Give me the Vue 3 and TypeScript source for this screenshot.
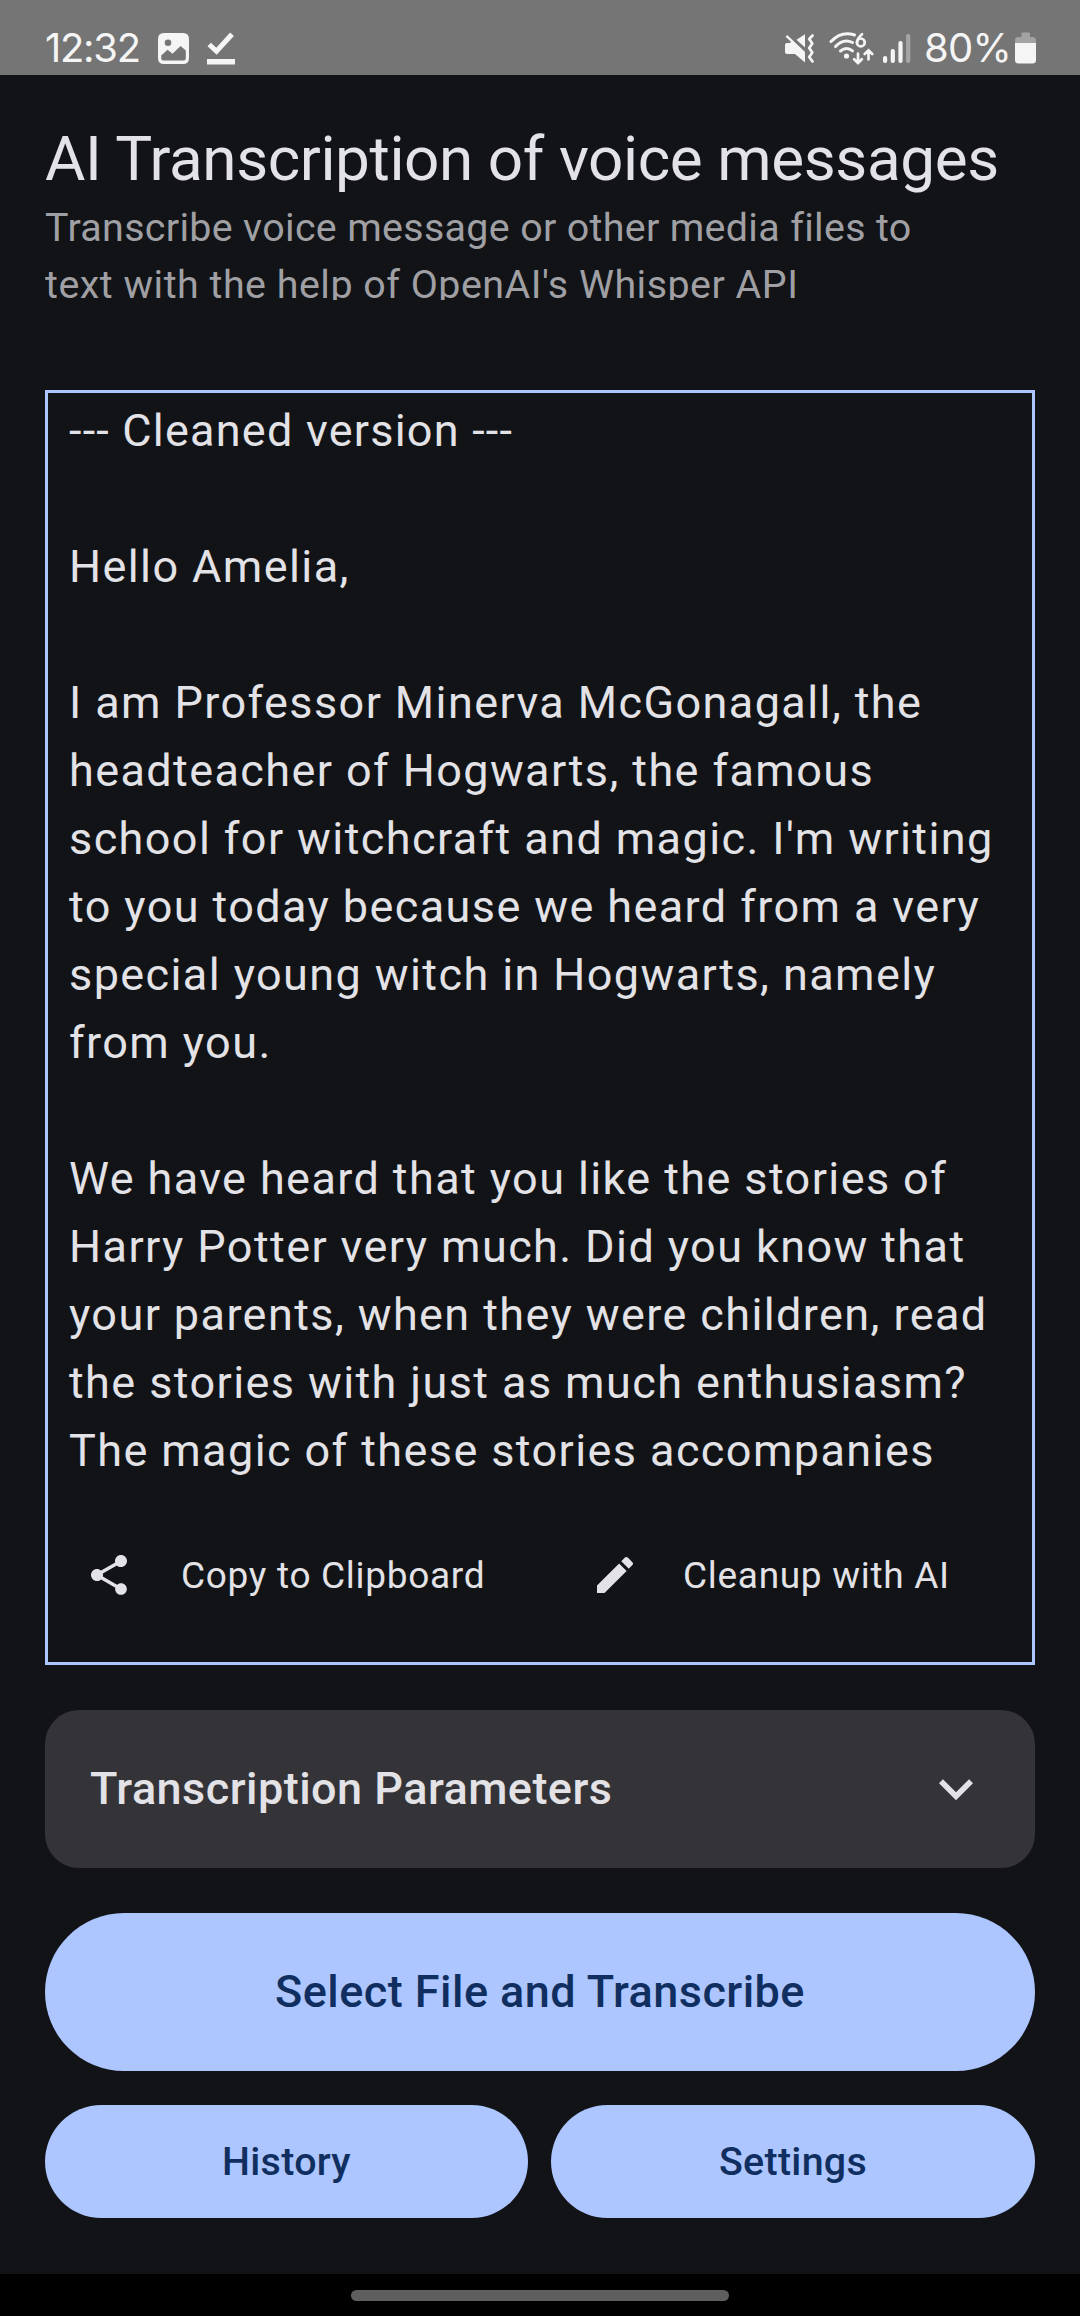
<script setup lang="ts">
const heading = '--- Cleaned version ---'

const transcript: string = [
  '',
  'Hello Amelia,',
  '',
  'I am Professor Minerva McGonagall, the',
  'headteacher of Hogwarts, the famous',
  "school for witchcraft and magic. I'm writing",
  'to you today because we heard from a very',
  'special young witch in Hogwarts, namely',
  'from you.',
  '',
  'We have heard that you like the stories of',
  'Harry Potter very much. Did you know that',
  'your parents, when they were children, read',
  'the stories with just as much enthusiasm?',
  'The magic of these stories accompanies',
].join('\n')
</script>

<template>
  <div class="screen">
    <div class="status">
      <span class="clock">12:32</span>
      <svg class="s-image" width="31" height="31" viewBox="0 0 31 31">
        <path fill="#f5f5f5" fill-rule="evenodd" d="M6 0H25Q31 0 31 6V25Q31 31 25 31H6Q0 31 0 25V6Q0 0 6 0ZM10 6.4a3.3 3.3 0 1 0 0 6.6a3.3 3.3 0 1 0 0-6.6ZM3.2 22.6V25.3Q3.2 27.6 5.5 27.6H25.5Q27.8 27.6 27.8 25.3V17.6L22.6 12.9L14.5 20.7L9.6 16.7Z" />
      </svg>
      <svg class="s-check" width="28" height="33" viewBox="0 0 28 33">
        <path d="M2.2 12.5L9.5 19.3L25 2.2" fill="none" stroke="#f5f5f5" stroke-width="5" />
        <rect x="0" y="27" width="28" height="5.5" fill="#f5f5f5" />
      </svg>
      <span class="spacer"></span>
      <svg class="s-mute" width="31" height="29" viewBox="0 0 31 29">
        <path d="M3 9H7L21 22V28.6L11 20H3Q1 20 1 18V11Q1 9 3 9Z" fill="#f5f5f5" />
        <path d="M12.5 5.8L21 .2V13.6Z" fill="#f5f5f5" />
        <path d="M5.5 9.5L21 24V18.5L8 7Z" fill="#f5f5f5" />
        <path d="M2.4 1.8L20 18.5" stroke="#f5f5f5" stroke-width="2.4" />
        <path d="M28.5 1.5L25.2 5L28.3 9.5L25.2 14L28.3 18.5L25.2 23L28.5 27.5" fill="none" stroke="#f5f5f5" stroke-width="2.7" stroke-linejoin="round" stroke-linecap="round" />
      </svg>
      <svg class="s-wifi" width="45" height="33" viewBox="0 0 45 33">
        <g fill="none" stroke="#f5f5f5" stroke-width="3" stroke-linecap="round">
          <path d="M2 9.5Q12.5-1.5 25.5 3" />
          <path d="M6.5 14.5Q14.5 6 23.5 10.5" />
          <path d="M11.5 19Q17.5 14 23.5 18.8" />
          <path d="M33 2.2Q28.5 6 28 10.5" stroke-width="2.7" />
          <circle cx="31.8" cy="10.4" r="3.9" stroke-width="2.7" />
          <path d="M29 21.5V31M25.2 27.3L29 31L32.8 27.3M39.5 27.5V18.5M35.7 22L39.5 18.3L43.2 22" stroke-width="2.7" />
        </g>
        <circle cx="17.5" cy="24" r="2.6" fill="#f5f5f5" />
      </svg>
      <svg class="s-signal" width="28" height="30" viewBox="0 0 28 30">
        <g fill="#f5f5f5">
          <rect x="0" y="22" width="4.2" height="7" rx="2" />
          <rect x="7.7" y="15" width="4.2" height="14" rx="2" />
          <rect x="15.4" y="7" width="4.2" height="22" rx="2" />
          <rect x="23.1" y="0" width="4.2" height="29" rx="2" opacity=".38" />
        </g>
      </svg>
      <span class="percent">80%</span>
      <svg class="s-battery" width="21" height="32" viewBox="0 0 21 32">
        <path d="M6.5 1.5Q6.5.5 7.5.5H14Q15 .5 15 1.5V5H17.5Q21 5 21 8.5V11H0V8.5Q0 5 3.5 5H6.5Z" fill="#a3a3a3" />
        <path d="M0 11H21V28Q21 31.5 17.5 31.5H3.5Q0 31.5 0 28Z" fill="#f5f5f5" />
      </svg>
    </div>

    <main class="content">
      <header class="intro">
        <h1>AI Transcription of voice messages</h1>
        <p class="first">Transcribe voice message or other media files to</p>
        <p>text with the help of OpenAI's Whisper API</p>
      </header>

      <section class="result">
        <div class="transcript heading">{{ heading }}</div>
        <div class="transcript">{{ transcript }}</div>
        <div class="actions">
          <div class="action copy">
            <svg width="48" height="48" viewBox="0 0 24 24" fill="#e3e2e6">
              <path d="M18 16.08c-.76 0-1.44.3-1.96.77L8.91 12.7c.05-.23.09-.46.09-.7s-.04-.47-.09-.7l7.05-4.11c.54.5 1.25.81 2.04.81 1.66 0 3-1.34 3-3s-1.34-3-3-3-3 1.34-3 3c0 .24.04.47.09.7L8.04 9.81C7.5 9.31 6.79 9 6 9c-1.66 0-3 1.34-3 3s1.34 3 3 3c.79 0 1.5-.31 2.04-.81l7.12 4.16c-.05.21-.08.43-.08.65 0 1.61 1.31 2.92 2.92 2.92s2.92-1.31 2.92-2.92-1.31-2.92-2.92-2.92z" />
            </svg>
            <span>Copy to Clipboard</span>
          </div>
          <div class="action cleanup">
            <svg width="48" height="48" viewBox="0 0 24 24" fill="#e3e2e6">
              <path d="M3 17.25V21h3.75L17.81 9.94l-3.75-3.75L3 17.25zM20.71 7.04c.39-.39.39-1.02 0-1.41l-2.34-2.34c-.39-.39-1.02-.39-1.41 0l-1.83 1.83 3.75 3.75 1.83-1.83z" />
            </svg>
            <span>Cleanup with AI</span>
          </div>
        </div>
      </section>

      <section class="params">
        <span>Transcription Parameters</span>
        <svg width="68" height="68" viewBox="0 0 24 24" fill="#e3e2e6">
          <path d="M7.41 8.59 12 13.17l4.59-4.58L18 10l-6 6-6-6 1.41-1.41z" />
        </svg>
      </section>

      <button class="btn primary">Select File and Transcribe</button>
      <div class="row">
        <button class="btn history">History</button>
        <button class="btn">Settings</button>
      </div>
    </main>

    <div class="nav"><div class="pill"></div></div>
  </div>
</template>

<style>
body {
  margin: 0;
  background: #111317;
}
</style>

<style scoped>
.screen {
  display: flex;
  flex-direction: column;
  width: 1080px;
  height: 2316px;
  overflow: hidden;
  background: #111317;
  color: #e3e2e6;
  font-family: Roboto, sans-serif;
}
.screen svg {
  display: block;
  flex: none;
}
.status {
  display: flex;
  align-items: flex-start;
  flex: none;
  box-sizing: border-box;
  height: 75px;
  padding: 0 44px 0 45px;
  background: #757575;
  color: #f5f5f5;
}
.spacer {
  flex: 1;
}
.clock,
.percent {
  font-family: Inter, sans-serif;
  font-size: 40px;
  line-height: 48px;
  margin-top: 24px;
  white-space: nowrap;
}
.clock {
  width: 113px;
  letter-spacing: -1.3px;
}
.s-image {
  margin-top: 33px;
}
.s-check {
  margin: 32px 0 0 18px;
}
.s-mute {
  margin-top: 34px;
}
.s-wifi {
  margin: 32px 0 0 14px;
}
.s-signal {
  margin: 34px 0 0 9px;
}
.percent {
  width: 91px;
  margin-left: 13px;
  letter-spacing: -0.8px;
}
.s-battery {
  margin-top: 32px;
}
.content {
  display: flex;
  flex-direction: column;
  flex: 1;
  padding: 45px 45px 0;
}
.intro {
  height: 180px;
  overflow: hidden;
}
h1 {
  height: 79px;
  margin: 0;
  font-size: 62px;
  font-weight: 400;
  line-height: 77px;
  letter-spacing: -0.4px;
  white-space: nowrap;
}
.intro p {
  margin: 0;
  font-size: 39.4px;
  line-height: 57px;
  letter-spacing: 0.5px;
  color: #a0a0a4;
  white-space: nowrap;
}
.intro .first {
  letter-spacing: 0.33px;
}
.result {
  box-sizing: border-box;
  height: 1275px;
  margin-top: 90px;
  padding: 4px 21px;
  border: 3px solid #adc6ff;
}
.transcript {
  font-size: 45px;
  line-height: 68px;
  letter-spacing: 1.4px;
  white-space: pre;
}
.heading {
  letter-spacing: 1.22px;
}
.actions {
  display: flex;
  margin-top: 66px;
}
.action {
  display: flex;
  align-items: center;
  height: 48px;
  font-size: 37px;
  letter-spacing: 0.7px;
  white-space: nowrap;
}
.copy {
  width: 506px;
  padding-left: 16px;
}
.copy span {
  margin-left: 48px;
}
.cleanup span {
  margin-left: 44px;
}
.params {
  display: flex;
  align-items: center;
  justify-content: space-between;
  box-sizing: border-box;
  height: 158px;
  margin-top: 45px;
  padding: 0 45px;
  border-radius: 34px;
  background: #343438;
  font-size: 45px;
  font-weight: 500;
  letter-spacing: 0.46px;
}
.params span {
  padding-bottom: 2px;
}
.btn {
  flex: 1;
  height: 113px;
  padding: 0;
  border: 0;
  border-radius: 79px;
  background: #adc6ff;
  color: #102f60;
  font: 500 39.4px Roboto, sans-serif;
  letter-spacing: 0.3px;
}
.primary {
  flex: none;
  height: 158px;
  margin-top: 45px;
  padding-bottom: 2px;
  font-size: 45px;
  letter-spacing: 0.45px;
}
.row {
  display: flex;
  gap: 23px;
  margin-top: 34px;
}
.history {
  flex: none;
  width: 483px;
}
.nav {
  flex: none;
  box-sizing: border-box;
  height: 42px;
  padding-top: 16px;
  background: #000;
}
.pill {
  width: 378px;
  height: 11px;
  margin: 0 auto;
  border-radius: 6px;
  background: #5e5e5e;
}
</style>
